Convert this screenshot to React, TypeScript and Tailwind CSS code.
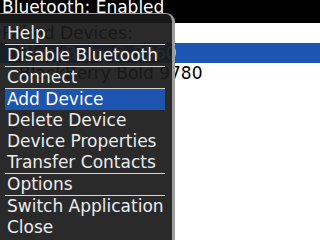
import React from 'react'

type MenuEntry = { label: string; selected?: boolean } | 'sep'

const menu: MenuEntry[] = [
  { label: 'Help' },
  'sep',
  { label: 'Disable Bluetooth' },
  'sep',
  { label: 'Connect' },
  'sep',
  { label: 'Add Device', selected: true },
  { label: 'Delete Device' },
  { label: 'Device Properties' },
  { label: 'Transfer Contacts' },
  'sep',
  { label: 'Options' },
  'sep',
  { label: 'Switch Application' },
  { label: 'Close' },
]

const font = { fontFamily: '"DejaVu Sans", Verdana, sans-serif' }

export default function App() {
  return (
    <div
      className="relative h-[240px] w-[320px] overflow-hidden bg-white text-[17px]"
      style={font}
    >
      <div className="h-[24px] bg-black">
        <div className="-mt-px pl-[2px] leading-[17px] text-white">Bluetooth: Enabled</div>
      </div>
      <div className="h-[20px] pl-[2px] leading-[20px] text-black">Paired Devices:</div>
      <div className="h-[20px] bg-[#1c56b2] pl-[19px] leading-[20px] text-white">BlackBerry® 9360</div>
      <div className="h-[20px] pl-[19px] leading-[20px] text-black">BlackBerry Bold 9780</div>

      {/* popup menu */}
      <div className="absolute bottom-0 left-0 top-[13px] w-[175px] rounded-tr-[9px] border-r-[3px] border-t border-[#9c9c9c] bg-[rgba(26,26,26,0.93)] pt-[9px]">
        <div className="flex flex-col">
          {menu.map((m, i) =>
            m === 'sep' ? (
              <div key={i} className="ml-[5px] h-px w-[160px] bg-[#d4d4d4]" />
            ) : (
              <div
                key={i}
                className={`ml-[5px] h-[21px] w-[160px] whitespace-nowrap pl-[2px] leading-[21px] text-[#ececec] ${
                  m.selected ? 'bg-[#1c55b0] text-white' : ''
                }`}
              >
                {m.label}
              </div>
            ),
          )}
        </div>
      </div>
    </div>
  )
}
